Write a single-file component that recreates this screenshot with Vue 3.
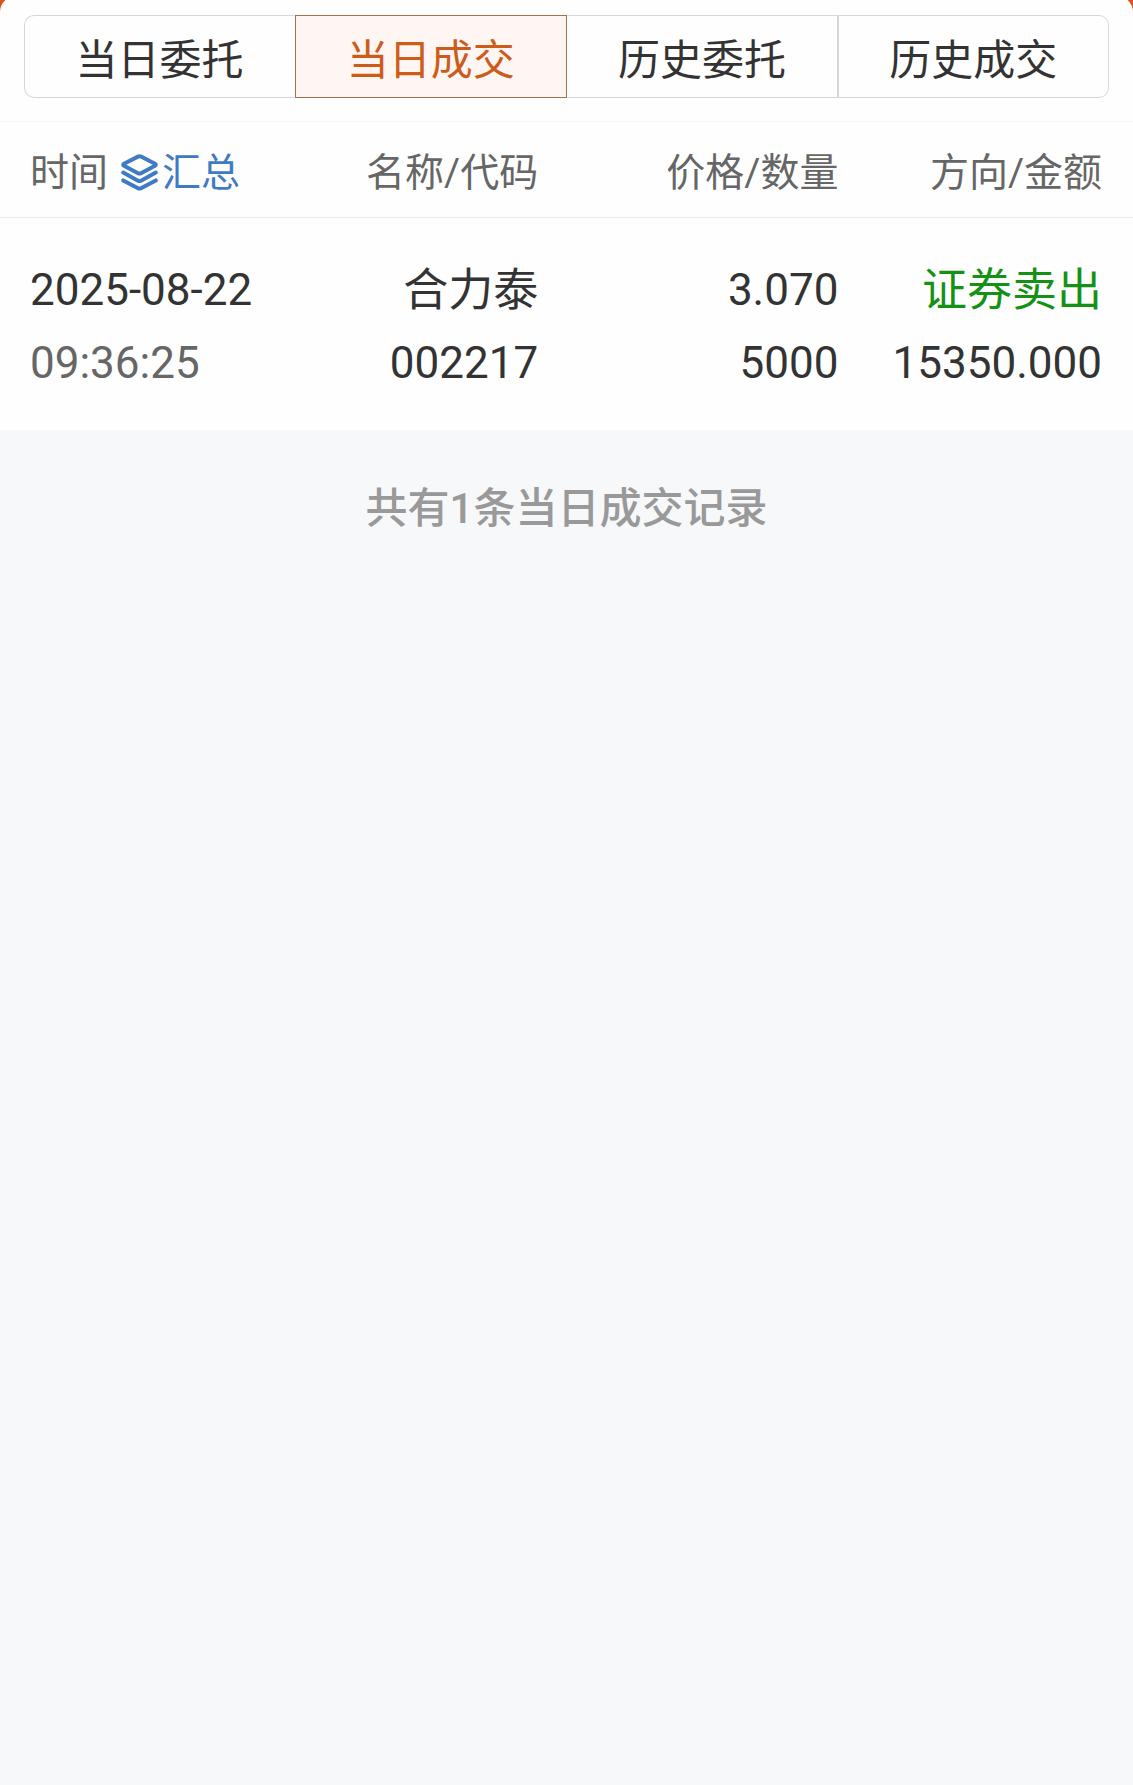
<script setup>
import { reactive, computed } from 'vue';

const tabs = [
    { id: 'entrust', label: '当日委托' },
    { id: 'deal', label: '当日成交' },
    { id: 'historyEntrust', label: '历史委托' },
    { id: 'historyDeal', label: '历史成交' }
];

const state = reactive({
    active: 'deal',
    deals: [
        {
            date: '2025-08-22',
            time: '09:36:25',
            name: '合力泰',
            code: '002217',
            price: '3.070',
            amount: '5000',
            side: 'sell',
            direction: '证券卖出',
            total: '15350.000'
        }
    ]
});

const activeLabel = computed(() => tabs.find(tab => tab.id === state.active).label);
</script>

<template>
    <div class="page">
        <main class="sheet">
            <nav class="tabs">
                <button
                    v-for="tab in tabs"
                    :key="tab.id"
                    type="button"
                    class="tab"
                    :class="{ active: tab.id === state.active }"
                    @click="state.active = tab.id"
                >
                    {{ tab.label }}
                </button>
            </nav>

            <table class="deals">
                <colgroup>
                    <col class="col-time">
                    <col class="col-name">
                    <col class="col-price">
                    <col class="col-total">
                </colgroup>
                <thead>
                    <tr>
                        <th scope="col">
                            <div class="time-head">
                                <span>时间</span>
                                <button type="button" class="summary">
                                    <svg viewBox="0 0 37 37" aria-hidden="true">
                                        <path d="M3 9.8 L17 2.6 Q18.5 1.8 20 2.6 L34 9.8 Q35.6 10.8 34 11.8 L20 19.2 Q18.5 20 17 19.2 L3 11.8 Q1.4 10.8 3 9.8 Z" />
                                        <path d="M2.2 18.6 L17 26.7 Q18.5 27.5 20 26.7 L34.8 18.6" />
                                        <path d="M2.2 26.4 L17 34.2 Q18.5 35 20 34.2 L34.8 26.4" />
                                    </svg>
                                    <span>汇总</span>
                                </button>
                            </div>
                        </th>
                        <th scope="col">名称/代码</th>
                        <th scope="col">价格/数量</th>
                        <th scope="col">方向/金额</th>
                    </tr>
                </thead>
                <tbody>
                    <tr v-for="deal in state.deals" :key="deal.code + deal.time">
                        <td>
                            <div>{{ deal.date }}</div>
                            <div class="muted">{{ deal.time }}</div>
                        </td>
                        <td>
                            <div class="word">{{ deal.name }}</div>
                            <div>{{ deal.code }}</div>
                        </td>
                        <td>
                            <div>{{ deal.price }}</div>
                            <div>{{ deal.amount }}</div>
                        </td>
                        <td>
                            <div class="word" :class="deal.side">{{ deal.direction }}</div>
                            <div>{{ deal.total }}</div>
                        </td>
                    </tr>
                </tbody>
            </table>
        </main>

        <p class="count">共有{{ state.deals.length }}条{{ activeLabel }}记录</p>
    </div>
</template>

<style>
body {
    margin: 0;
    background: #f7f8fa;
}
</style>

<style scoped>
.page {
    display: flow-root;
    min-height: 100vh;
    box-sizing: border-box;
    background: linear-gradient(#d9541a 16px, #f7f8fa 16px);
    color: #333;
    font-family: Roboto, "Noto Sans CJK SC", sans-serif;
}

/* the sheet slides up a little under the top edge */
.sheet {
    margin-top: -4px;
    background: #fefefe;
    border-radius: 16px 16px 0 0;
    overflow: hidden;
}

.tabs {
    display: grid;
    grid-template-columns: repeat(4, 1fr);
    padding: 19px 24px 23px;
    border-bottom: 1px solid #f6f6f6;
}

.tab {
    height: 83px;
    padding: 8px 0 0;
    border: 1px solid #d5d7d9;
    background: none;
    color: #333;
    font-family: inherit;
    font-size: 42px;
    line-height: 60px;
    cursor: pointer;
}
.tab:first-child {
    border-radius: 10px 0 0 10px;
}
.tab:last-child {
    border-radius: 0 10px 10px 0;
}
.tab.active {
    border-color: #a9714b;
    background: #fff6f3;
    color: #cd5c1b;
}
.tab:has(+ .active) {
    border-right-color: transparent;
}
.tab.active + .tab {
    border-left-color: transparent;
}

.deals {
    width: 100%;
    table-layout: fixed;
    border-collapse: collapse;
}

.col-time {
    width: 28%;
}
.col-name {
    width: 19.5%;
}
.col-price {
    width: 26.5%;
}
.col-total {
    width: 26%;
}

.deals th,
.deals td {
    text-align: right;
    font-weight: 400;
    white-space: nowrap;
}
.deals th {
    height: 89px;
    padding: 6px 0 0;
    border-bottom: 1px solid #e9e9e9;
    color: #666;
    font-size: 39px;
    line-height: 56px;
}
.deals td {
    padding: 36px 0 30px;
    font-size: 44px;
    line-height: 73px;
}
.deals th:first-child,
.deals td:first-child {
    padding-left: 30px;
    text-align: left;
}
.deals th:last-child,
.deals td:last-child {
    padding-right: 31px;
}

.time-head,
.summary {
    display: flex;
    align-items: center;
}
.time-head {
    gap: 13px;
}

.summary {
    gap: 4px;
    padding: 0;
    border: none;
    background: none;
    color: #3f7bc4;
    font: inherit;
    cursor: pointer;
}
.summary svg {
    width: 37px;
    height: 37px;
    fill: none;
    stroke: currentColor;
    stroke-width: 4;
    stroke-linecap: round;
    stroke-linejoin: round;
}

.word {
    font-size: 45px;
}
.muted {
    color: #666;
}
.sell {
    color: #159215;
}

.count {
    margin: 0;
    padding: 49px 24px;
    color: #999;
    font-size: 42px;
    font-weight: 500;
    line-height: 60px;
    text-align: center;
}
</style>
